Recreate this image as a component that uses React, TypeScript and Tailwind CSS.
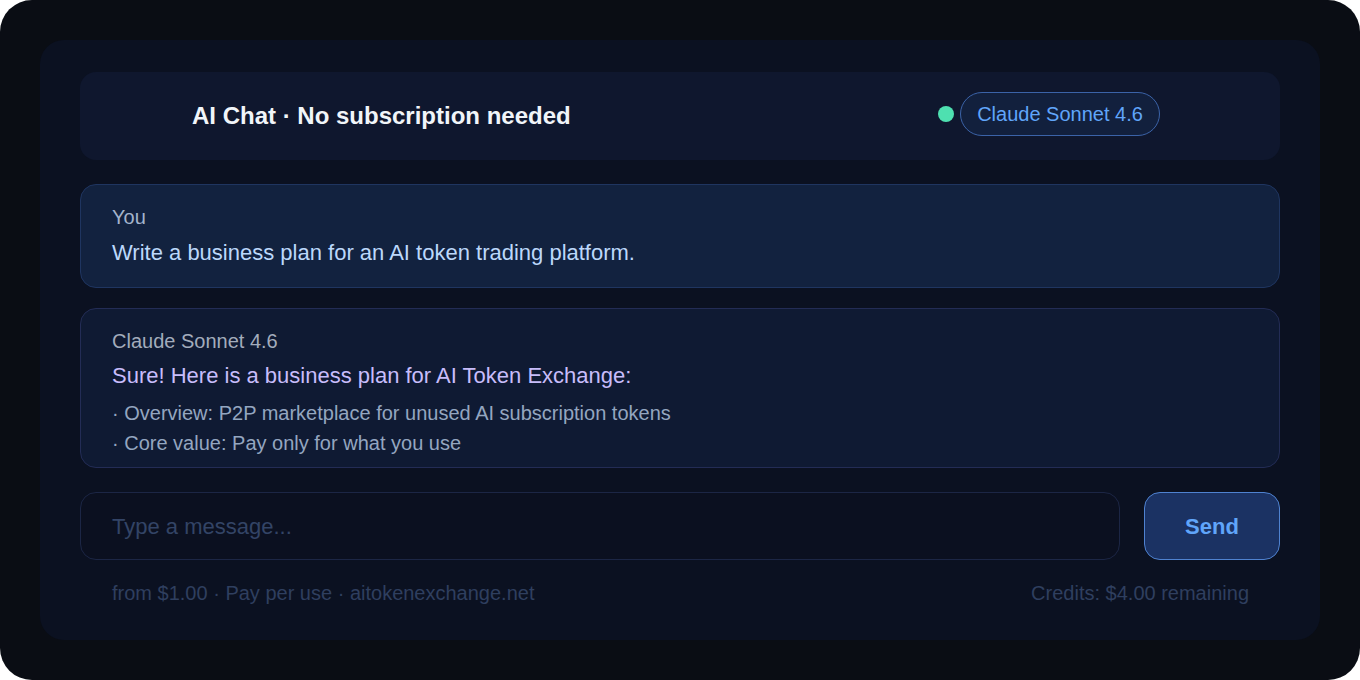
import React from 'react';

const App: React.FC = () => {
  return (
    <div className="w-[1360px] h-[680px] bg-[#0a0d14] rounded-[32px] p-10 font-['Liberation_Sans',Arial,sans-serif]">
      <div className="h-full bg-[#0b1121] rounded-3xl px-10 pt-8 flex flex-col">
        {/* Header */}
        <div className="h-[88px] shrink-0 bg-[#0f172e] rounded-2xl flex items-center justify-between pl-[112px] pr-[120px]">
          <h1 className="text-2xl leading-8 font-bold text-[#f1f5f9]">AI Chat · No subscription needed</h1>
          <div className="flex items-center gap-1.5 -mt-1">
            <span className="w-4 h-4 rounded-full bg-[#4ee0b0]" />
            <span className="h-11 w-[200px] rounded-full border border-[#3b63a8] bg-[#12203d] text-[#60a5fa] text-xl flex items-center justify-center">
              Claude Sonnet 4.6
            </span>
          </div>
        </div>

        {/* User message */}
        <div className="mt-6 h-[104px] shrink-0 rounded-2xl border border-[#1f3560] bg-[#12223f] px-[31px] pt-5">
          <div className="text-xl leading-6 text-[#a3b4cc]">You</div>
          <div className="mt-[10px] text-[22px] leading-7 text-[#bcd8fb]">Write a business plan for an AI token trading platform.</div>
        </div>

        {/* Assistant message */}
        <div className="mt-5 h-[160px] shrink-0 rounded-2xl border border-[#232c55] bg-[#0f1a33] px-[31px] pt-5">
          <div className="text-xl leading-6 text-[#a3acbc]">Claude Sonnet 4.6</div>
          <div className="mt-[9px] text-[22px] leading-7 text-[#c8bdfb]">Sure! Here is a business plan for AI Token Exchange:</div>
          <div className="mt-2 text-xl leading-[30px] text-[#94a6c0]">
            <div>· Overview: P2P marketplace for unused AI subscription tokens</div>
            <div>· Core value: Pay only for what you use</div>
          </div>
        </div>

        {/* Input row */}
        <div className="mt-6 flex gap-6 h-[68px] shrink-0">
          <div className="flex-1 rounded-2xl border border-[#1c2645] bg-[#0b1020] px-[31px] flex items-center">
            <span className="text-[22px] text-[#334466]">Type a message...</span>
          </div>
          <button className="w-[136px] rounded-2xl border border-[#4f82d0] bg-[#1b3263] text-[#60a5fa] text-[22px] font-bold">
            Send
          </button>
        </div>

        {/* Footer */}
        <div className="mt-[21px] flex justify-between pl-8 pr-[31px] text-xl leading-6 text-[#2f3f5f]">
          <span>from $1.00 · Pay per use · aitokenexchange.net</span>
          <span>Credits: $4.00 remaining</span>
        </div>
      </div>
    </div>
  );
};

export default App;
